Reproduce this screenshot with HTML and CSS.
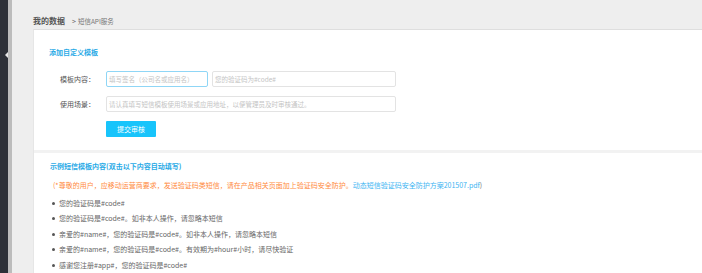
FILE: index.html
```html
<!DOCTYPE html>
<html lang="zh">
<head>
<meta charset="utf-8">
<title>短信API服务</title>
<link rel="stylesheet" href="styles.css">
</head>
<body>
<div class="sidebar"><span class="toggle"></span></div>
<div class="strip"></div>
<div class="main">
  <div class="crumbs">
    <span class="crumb-title">我的数据</span>
    <span class="crumb-sep">&gt;</span>
    <span class="crumb-sub">短信API服务</span>
  </div>
  <div class="card">
    <section class="add">
      <h2 class="sec-title">添加自定义模板</h2>
      <div class="form-row">
        <label class="label">模板内容：</label>
        <div class="input sign focus">填写签名（公司名或应用名）</div>
        <div class="input content">您的验证码为#code#</div>
      </div>
      <div class="form-row">
        <label class="label">使用场景：</label>
        <div class="input scene">请认真填写短信模板使用场景或应用地址，以便管理员及时审核通过。</div>
      </div>
      <div class="form-row">
        <span class="label"></span>
        <button class="submit">提交审核</button>
      </div>
    </section>
    <div class="divider"></div>
    <section class="examples">
      <h2 class="sec-title">示例短信模板内容(双击以下内容自动填写)</h2>
      <p class="notice">(*尊敬的用户，应移动运营商要求，发送验证码类短信，请在产品相关页面加上验证码安全防护。<a class="link">动态短信验证码安全防护方案201507.pdf</a><span class="close">)</span></p>
      <ul class="list">
        <li>您的验证码是#code#</li>
        <li>您的验证码是#code#。如非本人操作，请忽略本短信</li>
        <li>亲爱的#name#，您的验证码是#code#。如非本人操作，请忽略本短信</li>
        <li>亲爱的#name#，您的验证码是#code#。有效期为#hour#小时，请尽快验证</li>
        <li>感谢您注册#app#，您的验证码是#code#</li>
      </ul>
    </section>
  </div>
</div>
</body>
</html>
```

FILE: styles.css
```css
* { box-sizing: border-box; }
html, body { margin: 0; padding: 0; }
body {
  display: flex;
  height: 273px;
  overflow: hidden;
  font-family: "Noto Sans CJK SC", "Noto Sans", sans-serif;
  background: #eeeeee;
}
.sidebar {
  width: 8px;
  background: #2d3038;
  position: relative;
  flex: none;
}
.toggle {
  position: absolute;
  left: 5px;
  top: 52px;
  width: 0;
  height: 0;
  border-top: 3px solid transparent;
  border-bottom: 3px solid transparent;
  border-right: 3px solid #e8e8e8;
}
.strip {
  width: 4px;
  background: #bcbcbc;
  flex: none;
}
.main {
  flex: 1;
  padding-left: 21px;
  display: flex;
  flex-direction: column;
}
.crumbs {
  height: 36px;
  display: flex;
  align-items: center;
  padding-top: 13px;
  white-space: nowrap;
}
.crumb-title {
  font-size: 8px;
  font-weight: bold;
  color: #555;
}
.crumb-sep {
  font-size: 7px;
  color: #666;
  margin-left: 7px;
  margin-right: 2px;
}
.crumb-sub {
  font-size: 6.5px;
  color: #777;
}
.card {
  flex: 1;
  background: #fff;
  border-top: 1px solid #dedede;
  border-left: 1px solid #e6e6e6;
}
.add {
  padding: 17px 0 13px 15px;
}
.sec-title {
  margin: 0;
  font-size: 7px;
  line-height: 10px;
  font-weight: bold;
  color: #2aaae6;
}
.form-row {
  display: flex;
  align-items: center;
  margin-left: -15px;
  margin-top: 9px;
}
.add .form-row:first-of-type { margin-top: 14px; }
.label {
  width: 61px;
  text-align: right;
  font-size: 7px;
  color: #555;
  margin-right: 11px;
  flex: none;
}
.input {
  height: 16px;
  border: 1px solid #e3e3e3;
  border-radius: 2px;
  font-size: 6.5px;
  line-height: 14px;
  color: #c4c4c4;
  padding-left: 2px;
  white-space: nowrap;
  overflow: hidden;
}
.input.focus { border-color: #8fd6f6; }
.sign { width: 102px; }
.content { width: 184px; margin-left: 4px; }
.scene { width: 290px; }
.submit {
  width: 50px;
  height: 16px;
  border: none;
  border-radius: 1px;
  background: #18c4fb;
  color: #fff;
  font-family: inherit;
  font-size: 7px;
  padding: 0;
}
.divider {
  height: 3px;
  background: #f2f2f2;
}
.examples {
  padding: 8px 0 0 16px;
}
.notice {
  margin: 9px 0 0 3px;
  font-size: 7px;
  line-height: 10px;
  color: #ff8a3c;
  white-space: nowrap;
}
.link { color: #3cb4f2; }
.close { color: #777; }
.list {
  list-style: none;
  margin: 6px 0 0 2px;
  padding: 0;
}
.list li {
  font-size: 7px;
  line-height: 15.5px;
  color: #666;
  display: flex;
  align-items: center;
  white-space: nowrap;
}
.list li::before {
  content: "";
  width: 3px;
  height: 3px;
  border-radius: 50%;
  background: #555;
  margin-right: 4px;
  flex: none;
}
```
